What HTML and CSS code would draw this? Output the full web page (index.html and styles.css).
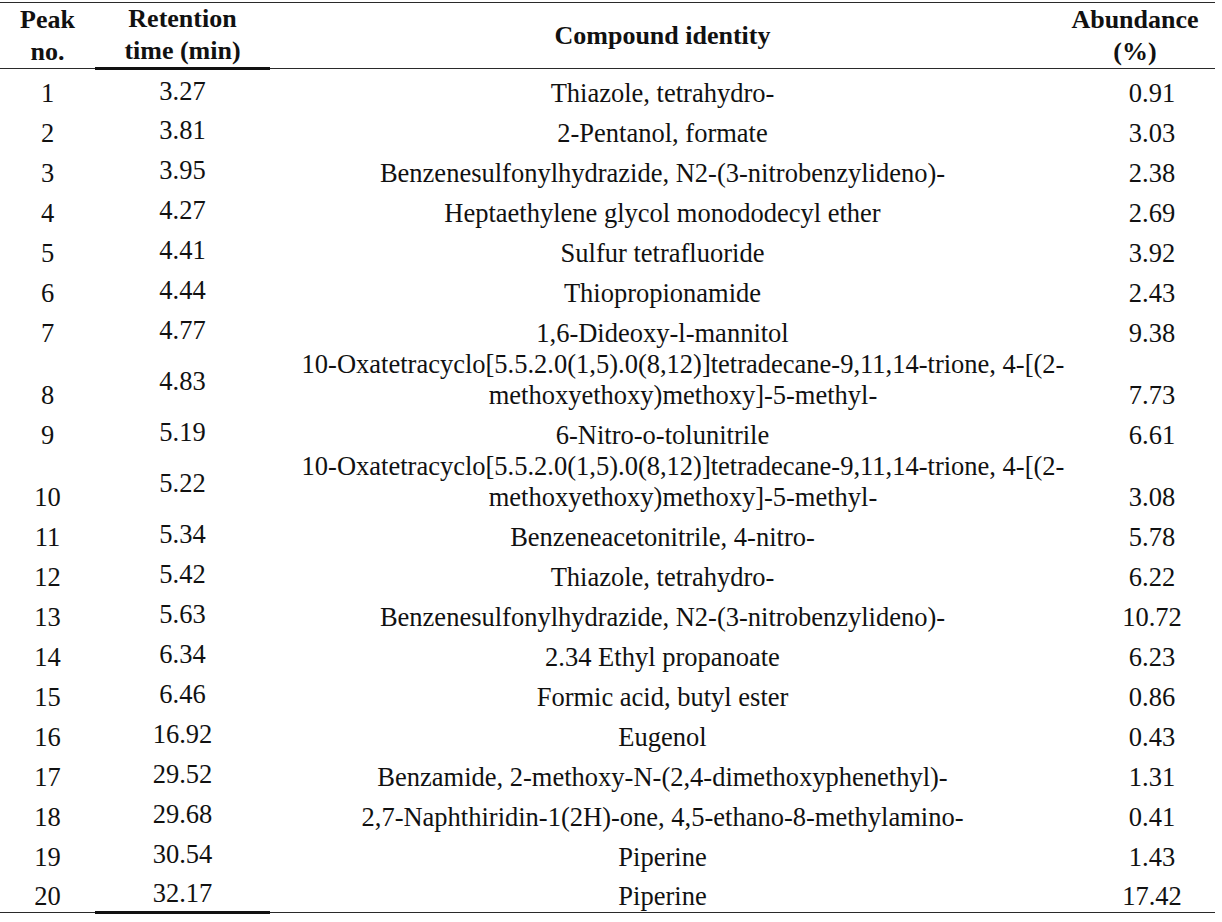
FILE: index.html
```html
<!DOCTYPE html>
<html>
<head>
<meta charset="utf-8">
<link rel="stylesheet" href="styles.css">
</head>
<body>
<table class="gc">
  <colgroup>
    <col class="c-peak">
    <col class="c-rt">
    <col class="c-name">
    <col class="c-ab">
  </colgroup>
  <thead>
    <tr class="head">
      <th class="peak">Peak<br>no.</th>
      <th class="rt">Retention<br>time (min)</th>
      <th class="name">Compound identity</th>
      <th class="ab">Abundance<br>(%)</th>
    </tr>
  </thead>
  <tbody>
    <tr><td class="peak">1</td><td class="rt">3.27</td><td class="name">Thiazole, tetrahydro-</td><td class="ab">0.91</td></tr>
    <tr><td class="peak">2</td><td class="rt">3.81</td><td class="name">2-Pentanol, formate</td><td class="ab">3.03</td></tr>
    <tr><td class="peak">3</td><td class="rt">3.95</td><td class="name">Benzenesulfonylhydrazide, N2-(3-nitrobenzylideno)-</td><td class="ab">2.38</td></tr>
    <tr><td class="peak">4</td><td class="rt">4.27</td><td class="name">Heptaethylene glycol monododecyl ether</td><td class="ab">2.69</td></tr>
    <tr><td class="peak">5</td><td class="rt">4.41</td><td class="name">Sulfur tetrafluoride</td><td class="ab">3.92</td></tr>
    <tr><td class="peak">6</td><td class="rt">4.44</td><td class="name">Thiopropionamide</td><td class="ab">2.43</td></tr>
    <tr><td class="peak">7</td><td class="rt">4.77</td><td class="name">1,6-Dideoxy-l-mannitol</td><td class="ab">9.38</td></tr>
    <tr><td class="peak">8</td><td class="rt">4.83</td><td class="name long"><div class="lines">10-Oxatetracyclo[5.5.2.0(1,5).0(8,12)]tetradecane-9,11,14-trione, 4-[(2-<br>methoxyethoxy)methoxy]-5-methyl-</div></td><td class="ab">7.73</td></tr>
    <tr><td class="peak">9</td><td class="rt">5.19</td><td class="name">6-Nitro-o-tolunitrile</td><td class="ab">6.61</td></tr>
    <tr><td class="peak">10</td><td class="rt">5.22</td><td class="name long"><div class="lines">10-Oxatetracyclo[5.5.2.0(1,5).0(8,12)]tetradecane-9,11,14-trione, 4-[(2-<br>methoxyethoxy)methoxy]-5-methyl-</div></td><td class="ab">3.08</td></tr>
    <tr><td class="peak">11</td><td class="rt">5.34</td><td class="name">Benzeneacetonitrile, 4-nitro-</td><td class="ab">5.78</td></tr>
    <tr><td class="peak">12</td><td class="rt">5.42</td><td class="name">Thiazole, tetrahydro-</td><td class="ab">6.22</td></tr>
    <tr><td class="peak">13</td><td class="rt">5.63</td><td class="name">Benzenesulfonylhydrazide, N2-(3-nitrobenzylideno)-</td><td class="ab">10.72</td></tr>
    <tr><td class="peak">14</td><td class="rt">6.34</td><td class="name">2.34 Ethyl propanoate</td><td class="ab">6.23</td></tr>
    <tr><td class="peak">15</td><td class="rt">6.46</td><td class="name">Formic acid, butyl ester</td><td class="ab">0.86</td></tr>
    <tr><td class="peak">16</td><td class="rt">16.92</td><td class="name">Eugenol</td><td class="ab">0.43</td></tr>
    <tr><td class="peak">17</td><td class="rt">29.52</td><td class="name">Benzamide, 2-methoxy-N-(2,4-dimethoxyphenethyl)-</td><td class="ab">1.31</td></tr>
    <tr><td class="peak">18</td><td class="rt">29.68</td><td class="name">2,7-Naphthiridin-1(2H)-one, 4,5-ethano-8-methylamino-</td><td class="ab">0.41</td></tr>
    <tr><td class="peak">19</td><td class="rt">30.54</td><td class="name">Piperine</td><td class="ab">1.43</td></tr>
    <tr class="last"><td class="peak">20</td><td class="rt">32.17</td><td class="name">Piperine</td><td class="ab">17.42</td></tr>
  </tbody>
</table>
</body>
</html>
```

FILE: styles.css
```css
html, body {
  margin: 0;
  padding: 0;
  background: #ffffff;
}

body {
  padding-top: 2px;
  font-family: "Liberation Serif", "Times New Roman", serif;
  color: #111111;
}

.gc {
  width: 1215px;
  table-layout: fixed;
  border-collapse: collapse;
  border-top: 1.5px solid #2a2a2a;
}

.c-peak { width: 95px; }
.c-rt { width: 175px; }
.c-name { width: 785px; }
.c-ab { width: 160px; }

.gc tr {
  height: 40px;
}

.gc tr.head {
  height: 63px;
}

.gc th {
  font-weight: bold;
  font-size: 26px;
  line-height: 32px;
  padding: 0;
  vertical-align: middle;
  text-align: center;
  border-bottom: 1.5px solid #2a2a2a;
}

.gc th.rt {
  border-bottom: 3px solid #111111;
}

.gc td {
  font-size: 26.5px;
  line-height: 31px;
  padding: 0;
  text-align: center;
  vertical-align: bottom;
  white-space: nowrap;
}

.gc td.rt {
  vertical-align: middle;
  padding-top: 4px;
}

.gc td.ab {
  padding-left: 34px;
}

.gc td.long {
  padding: 0;
}

.lines {
  margin-left: 13px;
  margin-right: -28px;
  text-align: center;
}

.gc tr.last td {
  border-bottom: 1.5px solid #2a2a2a;
}

.gc tr.last td.rt {
  border-bottom: 3px solid #111111;
}
```
